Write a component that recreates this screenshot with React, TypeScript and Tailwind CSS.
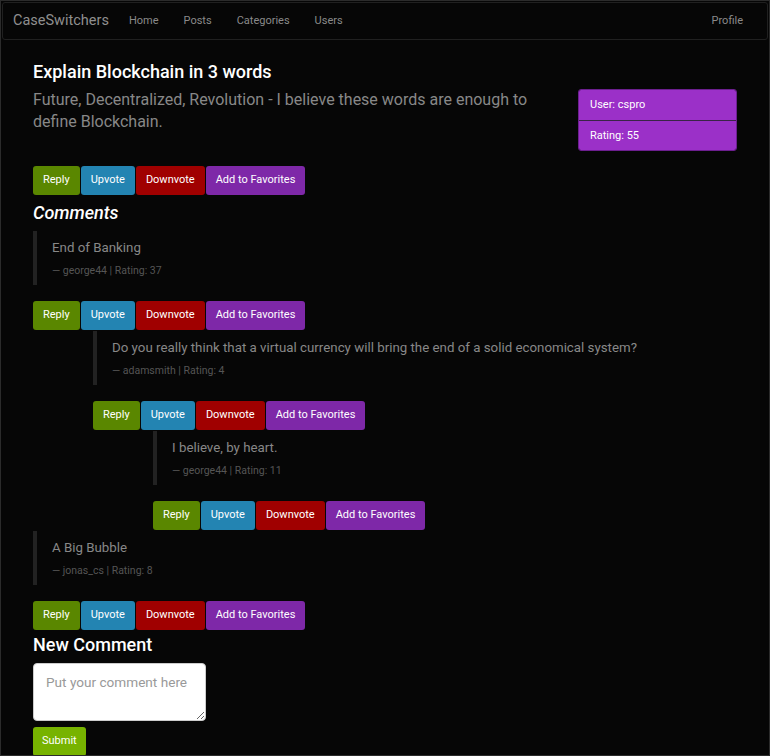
const font = { fontFamily: "Roboto, 'Noto Sans', sans-serif" };

type Comment = {
  text: string;
  author: string;
  rating: number;
  replies?: Comment[];
};

const comments: Comment[] = [
  {
    text: "End of Banking",
    author: "george44",
    rating: 37,
    replies: [
      {
        text: "Do you really think that a virtual currency will bring the end of a solid economical system?",
        author: "adamsmith",
        rating: 4,
        replies: [{ text: "I believe, by heart.", author: "george44", rating: 11 }],
      },
    ],
  },
  { text: "A Big Bubble", author: "jonas_cs", rating: 8 },
];

function Actions() {
  const base = "h-[29px] rounded-[3px] px-[10px] text-[11px] text-white";
  return (
    <div className="flex gap-px">
      <button type="button" className={`${base} bg-[#5a8700]`}>Reply</button>
      <button type="button" className={`${base} bg-[#2384b2]`}>Upvote</button>
      <button type="button" className={`${base} bg-[#a00000]`}>Downvote</button>
      <button type="button" className={`${base} bg-[#7e28a8]`}>Add to Favorites</button>
    </div>
  );
}

function CommentItem({ c }: { c: Comment }) {
  return (
    <div>
      <blockquote className="mb-4 border-l-4 border-[#222] pb-[6px] pl-[15px] pt-[8px]">
        <p className="text-[13.3px] leading-[18px] text-[#888]">{c.text}</p>
        <p className="mt-[6px] text-[10.5px] leading-[16px] text-[#555]">
          — {c.author} | Rating: {c.rating}
        </p>
      </blockquote>
      <Actions />
      {c.replies ? (
        <div className="ml-[60px] mt-px">
          {c.replies.map((r, i) => (
            <CommentItem key={i} c={r} />
          ))}
        </div>
      ) : (
        <div className="h-px" />
      )}
    </div>
  );
}

export default function App() {
  return (
    <div
      style={font}
      className="h-[756px] w-[770px] overflow-hidden border border-[#2b2b2b] bg-[#060606]"
    >
      <nav className="mx-px mt-px flex h-[38px] items-center rounded-[3px] border border-[#202020] bg-[#060606] pl-[10px] pr-[24px]">
        <span className="text-[14.5px] text-[#8f8f8f]">CaseSwitchers</span>
        <div className="ml-[20px] flex gap-[25px] text-[11px] text-[#8a8a8a]">
          <span>Home</span>
          <span>Posts</span>
          <span>Categories</span>
          <span>Users</span>
        </div>
        <span className="ml-auto text-[11px] text-[#8a8a8a]">Profile</span>
      </nav>

      <main className="px-[32px] pt-[21px]">
        <div className="flex justify-between">
          <div className="w-[510px]">
            <h1 className="text-[18px] font-medium leading-[22px] text-white">
              Explain Blockchain in 3 words
            </h1>
            <p className="mt-[6px] text-[16px] leading-[22px] text-[#888]">
              Future, Decentralized, Revolution - I believe these words are enough to define
              Blockchain.
            </p>
          </div>
          <ul className="mt-[28px] w-[159px] self-start overflow-hidden rounded-[3px] border border-[#6c1f8f] text-[11px] text-white">
            <li className="h-[30px] bg-[#9b30c8] px-[11px] leading-[29px]">User: cspro</li>
            <li className="h-[30px] border-t border-[#3a2446] bg-[#9b30c8] px-[11px] leading-[29px]">
              Rating: 55
            </li>
          </ul>
        </div>

        <div className="mt-[15px]">
          <Actions />
        </div>

        <h2 className="mt-[7px] text-[18px] font-medium italic leading-[22px] text-white">
          Comments
        </h2>

        <div className="mt-[7px]">
          {comments.map((c, i) => (
            <CommentItem key={i} c={c} />
          ))}
        </div>

        <h2 className="mt-[3px] text-[18px] font-medium leading-[22px] text-white">
          New Comment
        </h2>
        <textarea
          placeholder="Put your comment here"
          className="mt-[7px] block h-[58px] w-[173px] rounded-[4px] border border-[#ccc] bg-white px-[12px] py-[8px] text-[13.6px] text-black placeholder:text-[#999]"
        />
        <button
          type="button"
          className="mt-[6px] h-[29px] rounded-[3px] bg-[#77b300] px-[9px] text-[11px] text-white"
        >
          Submit
        </button>
      </main>
    </div>
  );
}
